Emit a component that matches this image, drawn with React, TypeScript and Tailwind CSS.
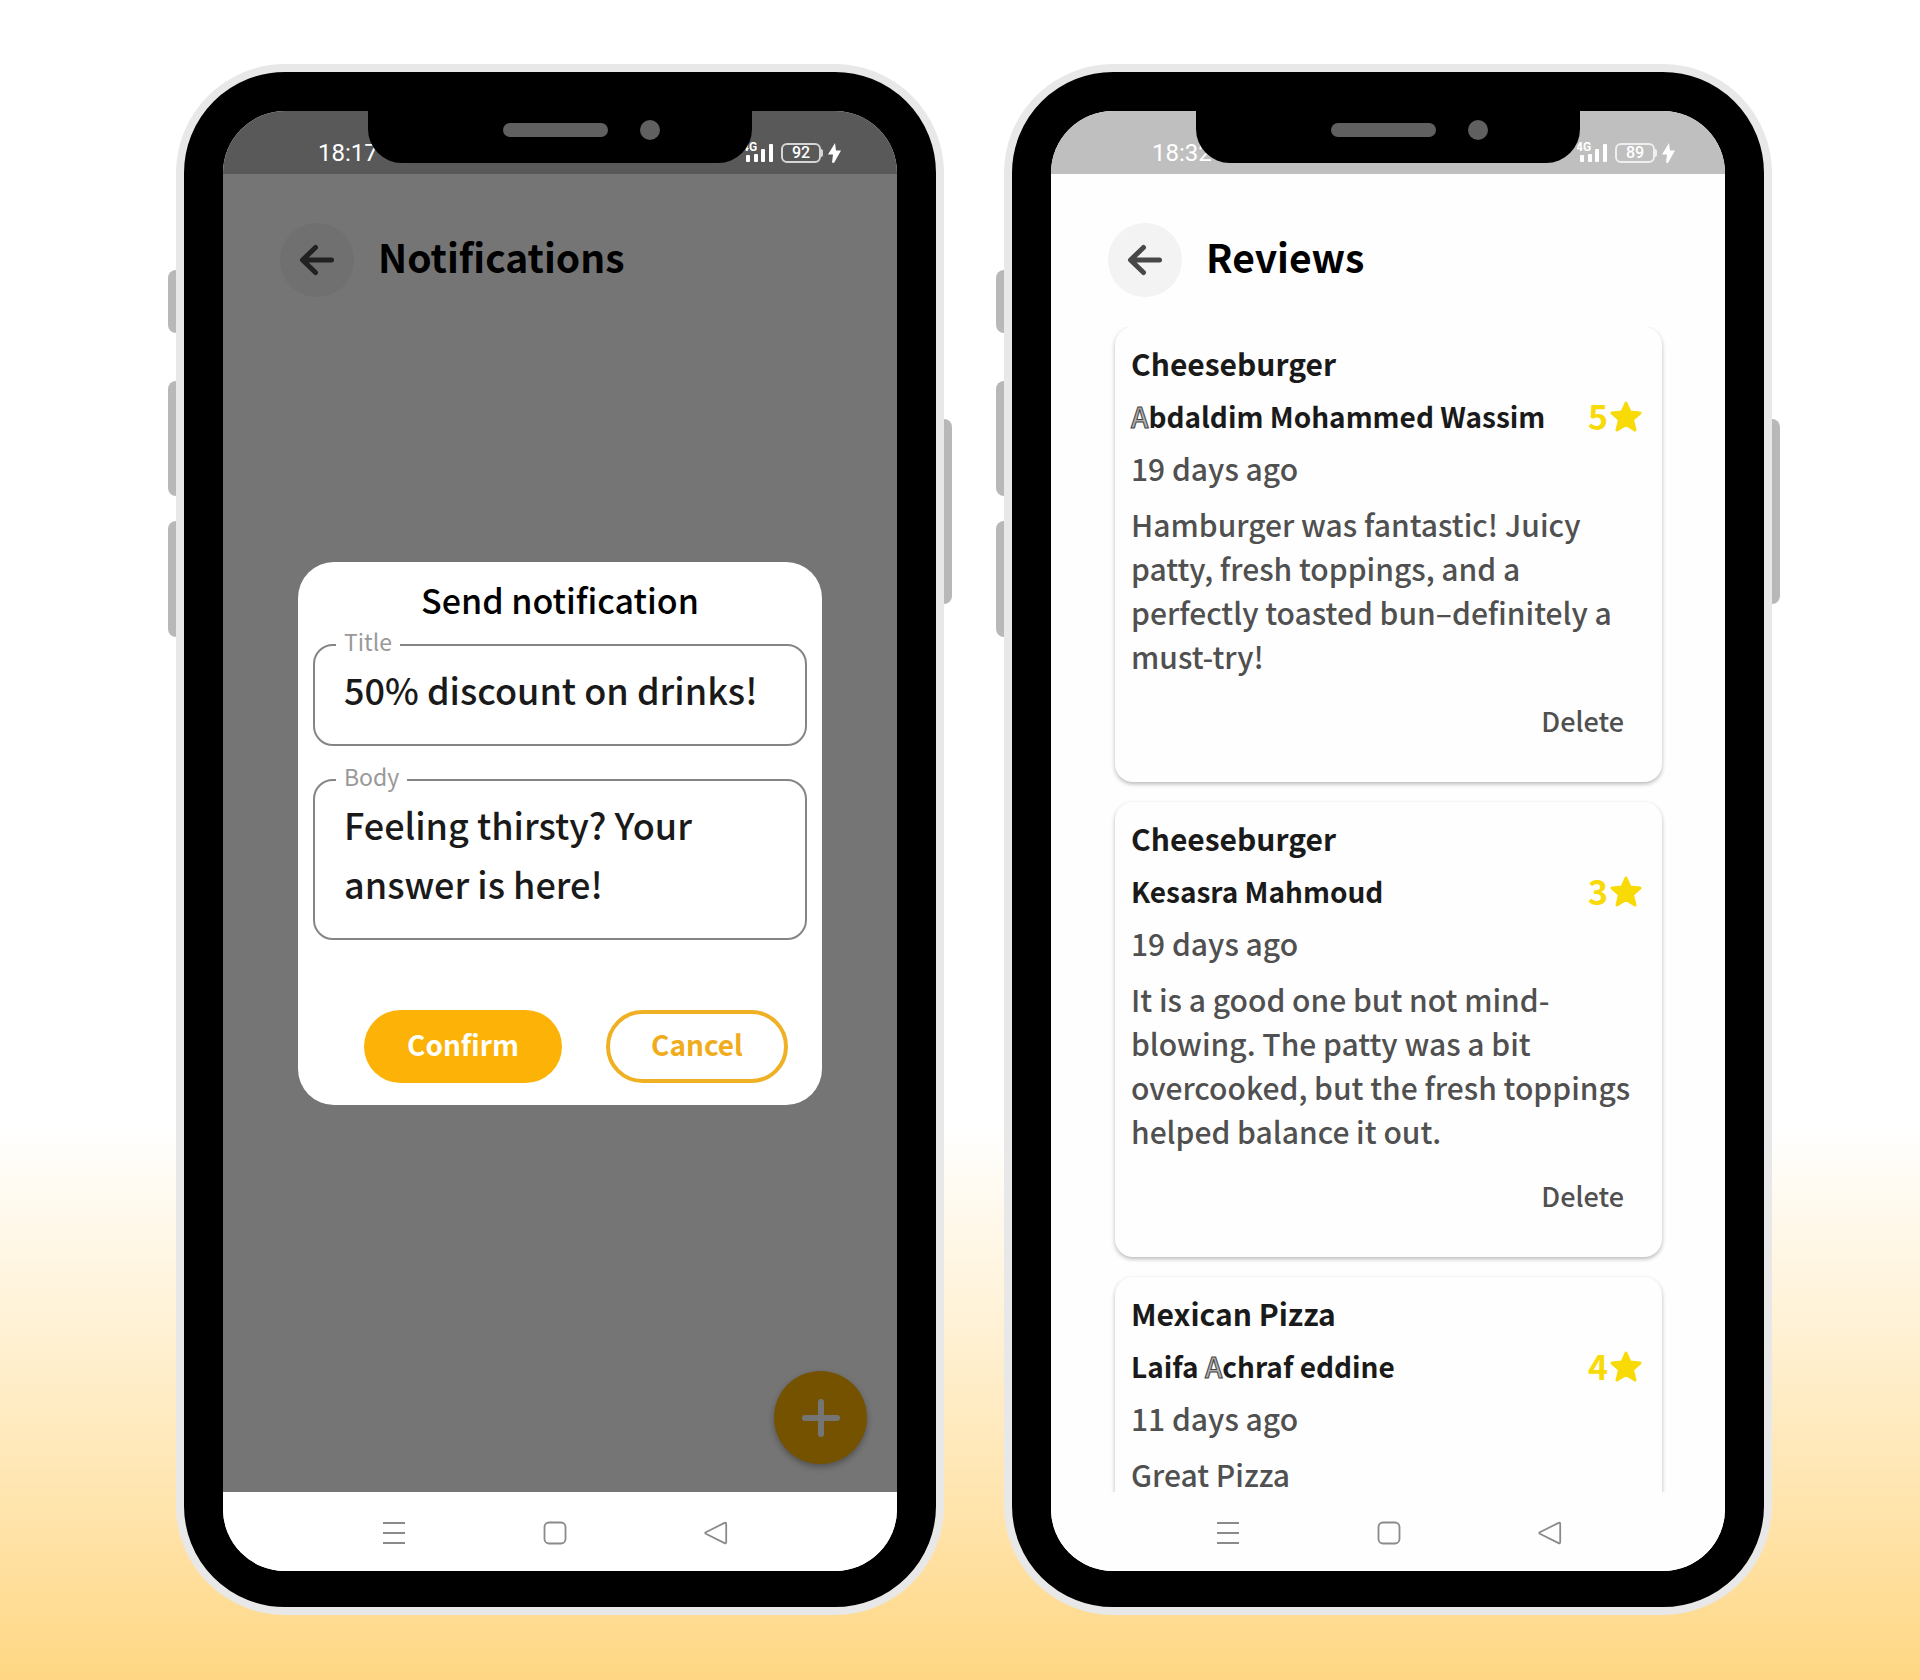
import type { ReactNode } from 'react'

type Review = {
  dish: string
  author: string
  rating: number
  age: string
  text: string
}

const reviews: Review[] = [
  {
    dish: 'Cheeseburger',
    author: 'Abdaldim Mohammed Wassim',
    rating: 5,
    age: '19 days ago',
    text: 'Hamburger was fantastic! Juicy patty, fresh toppings, and a perfectly toasted bun–definitely a must-try!',
  },
  {
    dish: 'Cheeseburger',
    author: 'Kesasra Mahmoud',
    rating: 3,
    age: '19 days ago',
    text: 'It is a good one but not mind-blowing. The patty was a bit overcooked, but the fresh toppings helped balance it out.',
  },
  {
    dish: 'Mexican Pizza',
    author: 'Laifa Achraf eddine',
    rating: 4,
    age: '11 days ago',
    text: 'Great Pizza',
  },
]

function StatusBar({ time, battery, className }: { time: string; battery: number; className: string }) {
  return (
    <div className={`flex h-[63px] shrink-0 items-center justify-between font-['Roboto',sans-serif] font-medium text-white ${className}`}>
      <span className="pt-[21px] text-[24px] leading-6 font-normal">{time}</span>
      <span className="flex items-center pt-[21px]">
        <svg width="34" height="22" viewBox="0 0 34 22" fill="currentColor" aria-hidden="true">
          <text x="-1" y="9" fontSize="12" fontWeight="700">4G</text>
          <rect x="3" y="13" width="4" height="7" rx="1" />
          <rect x="11" y="12" width="4" height="8" rx="1" />
          <rect x="18" y="7" width="4" height="13" rx="1" />
          <rect x="26" y="2" width="4" height="18" rx="1" />
        </svg>
        <span className="ml-1 flex h-5 w-10 items-center justify-center rounded-md border-2 border-white/75 text-[16px] leading-4">
          {battery}
        </span>
        <span className="h-2 w-[2px] rounded-r bg-white/75" />
        <svg className="ml-[5px]" width="13" height="22" viewBox="0 0 13 22" fill="currentColor" aria-hidden="true">
          <path d="M7 1 0 12.500h5L4 20.500l2 .5 7-12.500H8z" />
        </svg>
      </span>
    </div>
  )
}

function NavBar({ className }: { className: string }) {
  return (
    <nav className={`flex h-[79px] shrink-0 items-center justify-center gap-[137px] pt-[2px] text-[#8a8a8a] ${className}`}>
      <button type="button" aria-label="Recent apps">
        <svg width="24" height="24" viewBox="0 0 24 24" fill="none" stroke="currentColor" strokeWidth="2">
          <path d="M1 2h22M1 12h22M1 22h22" />
        </svg>
      </button>
      <button type="button" aria-label="Home">
        <svg width="24" height="24" viewBox="0 0 24 24" fill="none" stroke="currentColor" strokeWidth="1.8">
          <rect x="1.500" y="1.500" width="21" height="21" rx="4.500" />
        </svg>
      </button>
      <button type="button" aria-label="Back">
        <svg width="24" height="24" viewBox="0 0 24 24" fill="none" stroke="currentColor" strokeWidth="1.8" strokeLinejoin="round">
          <path d="M20.6 1.9 1.8 11.2q-1.3.8 0 1.6l18.8 9.3q1.6.6 1.6-1V2.9q0-1.6-1.6-1z" />
        </svg>
      </button>
    </nav>
  )
}

function ScreenHeader({ title }: { title: string }) {
  return (
    <header className="flex items-center gap-6 px-[57px] pt-[49px]">
      <button type="button" aria-label="Go back" className="flex size-[74px] items-center justify-center rounded-full bg-[#f3f3f3] text-[#484848]">
        <svg width="36" height="32" viewBox="0 0 36 32" fill="none" stroke="currentColor" strokeWidth="5" strokeLinecap="round" strokeLinejoin="round" aria-hidden="true">
          <path d="M32.500 16H4M16.500 3.500 3.500 16l13 12.500" />
        </svg>
      </button>
      <h1 className="pb-2 text-[39px] leading-[60px] font-bold text-black">{title}</h1>
    </header>
  )
}

function Phone({ children }: { children: ReactNode }) {
  return (
    <section className="relative aspect-[768/1551] w-full max-w-[768px] rounded-[109px] border-8 border-[#e8e8e8] bg-black px-[39px] pt-[39px] pb-9">
      <span className="absolute top-[198px] -left-4 h-[63px] w-2 rounded-l-lg bg-[#b8b8b8]" />
      <span className="absolute top-[309px] -left-4 h-[115px] w-2 rounded-l-lg bg-[#b8b8b8]" />
      <span className="absolute top-[449px] -left-4 h-[116px] w-2 rounded-l-lg bg-[#b8b8b8]" />
      <span className="absolute top-[347px] -right-4 h-[185px] w-2 rounded-r-lg bg-[#b8b8b8]" />
      <div className="relative flex h-full flex-col overflow-hidden rounded-[62px] bg-[#fefefe]">
        {children}
        <div className="absolute top-0 left-1/2 flex h-[52px] w-96 -translate-x-1/2 items-start justify-center rounded-b-[34px] bg-black pr-[10px]">
          <span className="mt-3 h-[14px] w-[105px] rounded-full bg-[#606060]" />
          <span className="absolute top-[9px] right-[92px] size-5 rounded-full bg-[#606060]" />
        </div>
      </div>
    </section>
  )
}

function NotificationDialog() {
  return (
    <div className="absolute inset-0 flex items-center justify-center bg-black/54">
      <form
        role="dialog"
        aria-labelledby="dialog-title"
        className="mx-[75px] flex w-full flex-col rounded-[36px] bg-white px-[15px] pt-[14px] pb-[22px] font-medium"
      >
        <h2 id="dialog-title" className="mb-[6px] text-center text-[34px] leading-[48px] text-black">
          Send notification
        </h2>
        <fieldset className="rounded-[20px] border-2 border-[#858585] px-[21px] pb-[25px]">
          <legend className="px-2 pb-2 text-[23px] leading-[22px] font-normal text-[#999999]">
            <label htmlFor="notification-title">Title</label>
          </legend>
          <input
            id="notification-title"
            className="block h-[59px] w-full px-2 text-[36px] text-[#1a1a1a] outline-none"
            defaultValue="50% discount on drinks!"
          />
        </fieldset>
        <fieldset className="mt-[19px] rounded-[20px] border-2 border-[#858585] px-[21px] pb-[25px]">
          <legend className="px-2 pb-2 text-[23px] leading-[22px] font-normal text-[#999999]">
            <label htmlFor="notification-body">Body</label>
          </legend>
          <textarea
            id="notification-body"
            rows={2}
            className="block w-full resize-none overflow-hidden px-2 text-[36px] leading-[59px] text-[#1a1a1a] outline-none"
            defaultValue="Feeling thirsty? Your answer is here!"
          />
        </fieldset>
        <div className="mt-[70px] mr-[19px] flex justify-end gap-11 text-[28px] leading-[60px] font-bold">
          <button type="submit" className="h-[73px] w-[198px] rounded-full bg-[#fcb206] pb-1 text-white">Confirm</button>
          <button type="button" className="h-[73px] w-[182px] rounded-full border-4 border-[#f0b024] pb-1 text-[#f0ac1c]">Cancel</button>
        </div>
      </form>
    </div>
  )
}

function AuthorName({ name }: { name: string }) {
  return name.split(/(A)/).map((part, index) =>
    part === 'A' ? (
      <span key={index} className="font-medium text-[#b0b0b0] [-webkit-text-stroke:1px_#444444]">{part}</span>
    ) : (
      part
    ),
  )
}

function ReviewCard({ review }: { review: Review }) {
  return (
    <li className="rounded-[18px] bg-[#fefefe] px-4 pt-[14px] pb-[39px] leading-[44px] text-[#505050] shadow-[0_2px_4px_rgba(0,0,0,0.28)]">
      <h2 className="text-[30px] font-bold text-[#1a1a1a]">{review.dish}</h2>
      <div className="mt-[9px] flex items-center justify-between">
        <h3 className="text-[28px] font-bold whitespace-nowrap text-[#1a1a1a]">
          <AuthorName name={review.author} />
        </h3>
        <p className="flex items-center gap-[2px] pr-1 text-[34px] font-bold text-[#f8da06]">
          {review.rating}
          <svg width="32" height="31" viewBox="0 0 32 31" fill="currentColor" stroke="currentColor" strokeWidth="3" strokeLinejoin="round" aria-hidden="true">
            <path d="m16 2 4 9 10 1-7.500 6.500L25 29l-9-5.500L7 29l2.500-10.500L2 12l10-1z" />
          </svg>
        </p>
      </div>
      <p className="mt-2 text-[30px] font-medium">{review.age}</p>
      <p className="mt-3 pr-2 text-[30px] font-medium">{review.text}</p>
      <div className="mt-[21px] flex justify-end pr-[22px]">
        <button type="button" className="text-[27px] font-medium">Delete</button>
      </div>
    </li>
  )
}

export default function App() {
  return (
    <main className="flex min-h-screen items-start justify-center gap-[60px] bg-linear-to-b from-white from-67% to-[#ffd783] pt-16 pr-[28px] pl-[56px] font-['Noto_Sans_CJK_SC',sans-serif]">
      <Phone>
        <StatusBar time="18:17" battery={92} className="bg-[#595959] pr-14 pl-[95px]" />
        <div className="relative flex-1">
          <ScreenHeader title="Notifications" />
          <button type="button" aria-label="Add notification" className="absolute right-[30px] bottom-7 flex size-[93px] items-center justify-center rounded-full bg-[#ffb300] text-white shadow-[0_3px_6px_rgba(0,0,0,0.3)]">
            <svg width="38" height="38" viewBox="0 0 38 38" fill="none" stroke="currentColor" strokeWidth="6" strokeLinecap="round" aria-hidden="true">
              <path d="M19 3v32M3 19h32" />
            </svg>
          </button>
          <NotificationDialog />
        </div>
        <NavBar className="bg-white pr-[10px]" />
      </Phone>
      <Phone>
        <StatusBar time="18:32" battery={89} className="bg-[#bfbfbf] pr-[50px] pl-[101px]" />
        <div className="flex min-h-0 flex-1 flex-col">
          <ScreenHeader title="Reviews" />
          <ul className="mt-[30px] flex min-h-0 flex-1 flex-col gap-5 overflow-hidden pr-[63px] pl-16">
            {reviews.map((review) => (
              <ReviewCard key={review.author} review={review} />
            ))}
          </ul>
        </div>
        <NavBar className="bg-[#fefefe] pl-[2px]" />
      </Phone>
    </main>
  )
}
